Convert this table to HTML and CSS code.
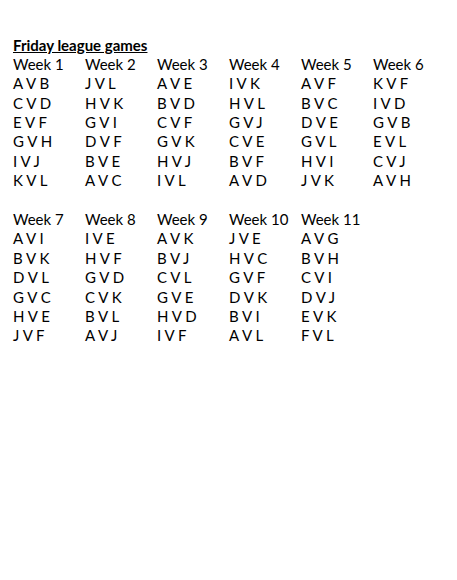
FILE: index.html
```html
<!DOCTYPE html>
<html>
<head>
<meta charset="utf-8">
<link rel="stylesheet" href="styles.css">
</head>
<body>
<div class="sheet">
  <div class="title">Friday league games</div>
  <div class="block">
    <div class="col"><div>Week 1</div><div>A V B</div><div>C V D</div><div>E V F</div><div>G V H</div><div>I V J</div><div>K V L</div></div>
    <div class="col"><div>Week 2</div><div>J V L</div><div>H V K</div><div>G V I</div><div>D V F</div><div>B V E</div><div>A V C</div></div>
    <div class="col"><div>Week 3</div><div>A V E</div><div>B V D</div><div>C V F</div><div>G V K</div><div>H V J</div><div>I V L</div></div>
    <div class="col"><div>Week 4</div><div>I V K</div><div>H V L</div><div>G V J</div><div>C V E</div><div>B V F</div><div>A V D</div></div>
    <div class="col"><div>Week 5</div><div>A V F</div><div>B V C</div><div>D V E</div><div>G V L</div><div>H V I</div><div>J V K</div></div>
    <div class="col"><div>Week 6</div><div>K V F</div><div>I V D</div><div>G V B</div><div>E V L</div><div>C V J</div><div>A V H</div></div>
  </div>
  <div class="blank"></div>
  <div class="block">
    <div class="col"><div>Week 7</div><div>A V I</div><div>B V K</div><div>D V L</div><div>G V C</div><div>H V E</div><div>J V F</div></div>
    <div class="col"><div>Week 8</div><div>I V E</div><div>H V F</div><div>G V D</div><div>C V K</div><div>B V L</div><div>A V J</div></div>
    <div class="col"><div>Week 9</div><div>A V K</div><div>B V J</div><div>C V L</div><div>G V E</div><div>H V D</div><div>I V F</div></div>
    <div class="col"><div>Week 10</div><div>J V E</div><div>H V C</div><div>G V F</div><div>D V K</div><div>B V I</div><div>A V L</div></div>
    <div class="col"><div>Week 11</div><div>A V G</div><div>B V H</div><div>C V I</div><div>D V J</div><div>E V K</div><div>F V L</div></div>
  </div>
</div>
</body>
</html>
```
FILE: styles.css
```css
html, body {
  margin: 0;
  padding: 0;
  background: #fff;
}
.sheet {
  padding: 35.5px 0 0 13px;
  font-family: Lato, "Liberation Sans", sans-serif;
  font-size: 15px;
  line-height: 19.4px;
  color: #000;
}
.title {
  font-weight: bold;
  text-decoration: underline;
  height: 19.4px;
}
.block {
  display: grid;
  grid-template-columns: repeat(6, 72px);
}
.col div {
  height: 19.4px;
  white-space: nowrap;
}
.blank {
  height: 19.4px;
}
```
